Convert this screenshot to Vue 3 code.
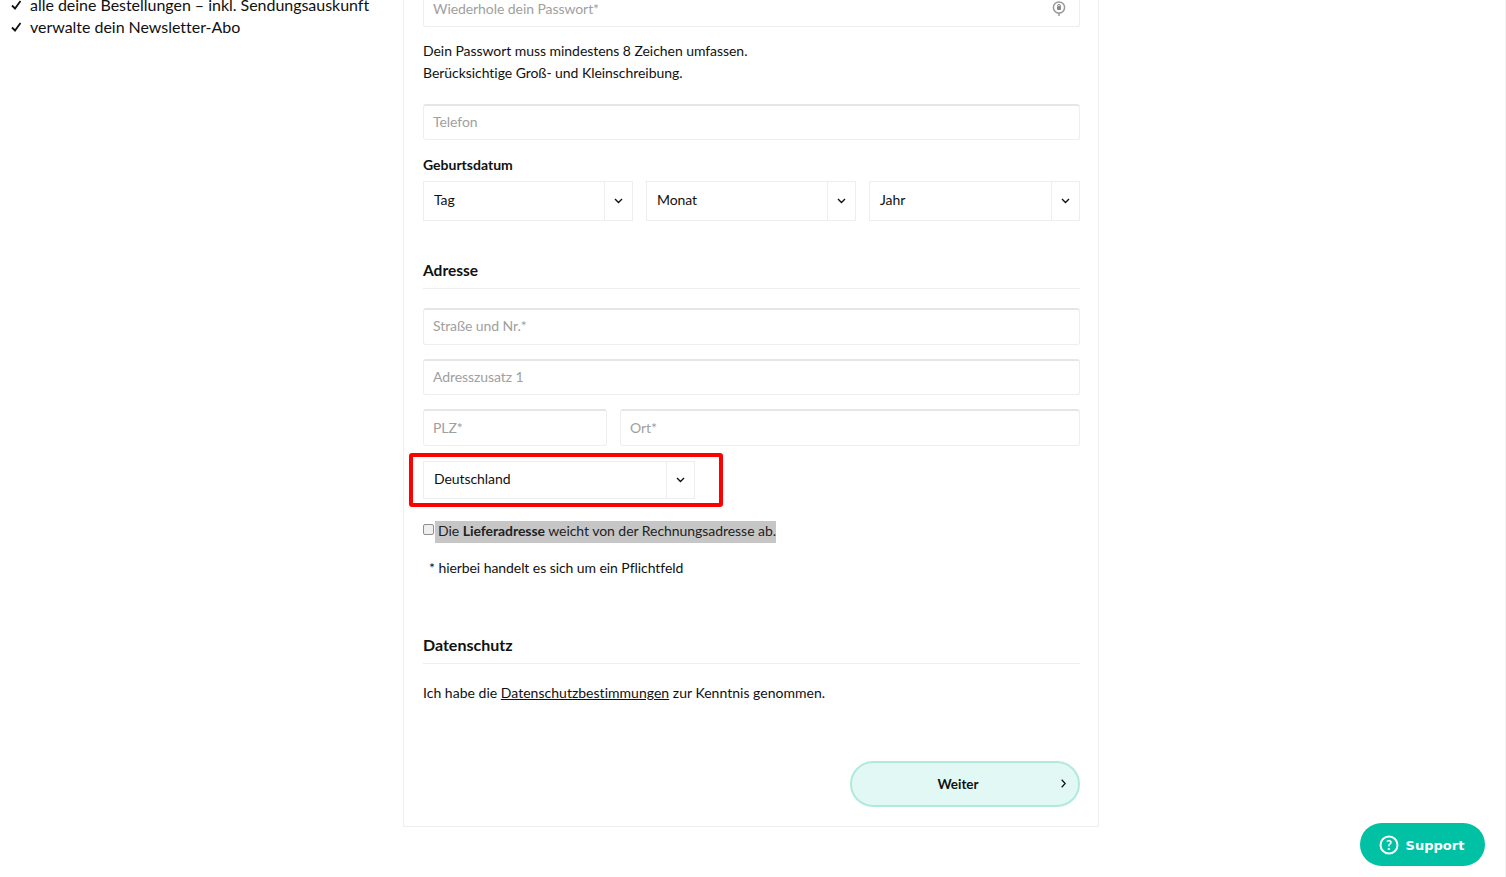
<script setup>
const selects = ['Tag', 'Monat', 'Jahr']
const items = ['alle deine Bestellungen – inkl. Sendungsauskunft', 'verwalte dein Newsletter-Abo']
</script>

<template>
  <div class="page">
    <aside class="side">
      <ul class="list">
        <li v-for="item in items" :key="item">
          <svg class="check" width="11" height="10" viewBox="0 0 11 10"><path d="M1 5.5 L4 8.5 L9.5 1" fill="none" stroke="#111" stroke-width="1.8"/></svg>
          <span>{{ item }}</span>
        </li>
      </ul>
    </aside>
    <main class="card">
      <div class="input pw">
        <span class="ph">Wiederhole dein Passwort*</span>
        <svg class="eye" width="14" height="17" viewBox="0 0 14 17">
          <circle cx="7" cy="7.5" r="5.6" fill="none" stroke="#999" stroke-width="1.5"/>
          <rect x="5" y="6" width="4" height="4" rx="1" fill="#888"/>
          <path d="M5.6 6 a1.4 1.6 0 0 1 2.8 0" fill="none" stroke="#888" stroke-width="1"/>
          <path d="M7 13 v3" stroke="#999" stroke-width="1.5"/>
        </svg>
      </div>
      <p class="hint">Dein Passwort muss mindestens 8 Zeichen umfassen.<br>Berücksichtige Groß- und Kleinschreibung.</p>
      <div class="input tel"><span class="ph">Telefon</span></div>
      <div class="label">Geburtsdatum</div>
      <div class="dates">
        <div v-for="s in selects" :key="s" class="select">
          <span class="val">{{ s }}</span>
          <span class="arrow">
            <svg width="9" height="6" viewBox="0 0 9 6"><path d="M1 1 L4.5 4.5 L8 1" fill="none" stroke="#111" stroke-width="1.4"/></svg>
          </span>
        </div>
      </div>
      <h2 class="heading adresse">Adresse</h2>
      <div class="input street"><span class="ph">Straße und Nr.*</span></div>
      <div class="input extra"><span class="ph">Adresszusatz 1</span></div>
      <div class="city">
        <div class="input plz"><span class="ph">PLZ*</span></div>
        <div class="input ort"><span class="ph">Ort*</span></div>
      </div>
      <div class="country">
        <div class="select land">
          <span class="val">Deutschland</span>
          <span class="arrow">
            <svg width="9" height="6" viewBox="0 0 9 6"><path d="M1 1 L4.5 4.5 L8 1" fill="none" stroke="#111" stroke-width="1.4"/></svg>
          </span>
        </div>
        <div class="redbox"></div>
      </div>
      <div class="checkrow">
        <span class="box"></span>
        <span class="mark">Die <b>Lieferadresse</b> weicht von der Rechnungsadresse ab.</span>
      </div>
      <p class="req">* hierbei handelt es sich um ein Pflichtfeld</p>
      <h2 class="heading privacy">Datenschutz</h2>
      <p class="consent">Ich habe die <a class="link">Datenschutzbestimmungen</a> zur Kenntnis genommen.</p>
      <div class="actions">
        <button class="next" type="button">
          <span>Weiter</span>
          <svg class="chev" width="5" height="9" viewBox="0 0 5 9"><path d="M0.7 0.8 L4.2 4.5 L0.7 8.2" fill="none" stroke="#111" stroke-width="1.3"/></svg>
        </button>
      </div>
    </main>
    <button class="support" type="button">
      <svg width="20" height="20" viewBox="0 0 20 20">
        <circle cx="10" cy="10" r="8.5" fill="none" stroke="#fff" stroke-width="2"/>
        <text x="10" y="14.5" text-anchor="middle" font-size="13" font-weight="700" fill="#fff" font-family="Lato, sans-serif">?</text>
      </svg>
      <span class="support-text">Support</span>
    </button>
  </div>
</template>

<style>
html, body { margin: 0; background: #fff; overflow: hidden; }
</style>

<style scoped>
.page {
  position: relative;
  box-sizing: border-box;
  height: 877px;
  overflow: hidden;
  display: flex;
  align-items: flex-start;
  font-family: Lato, "Open Sans", sans-serif;
  font-size: 14px;
  color: #111;
  background: #fff;
  border-right: 1px solid #f2f2f2;
}
.side { width: 403px; flex: none; }
.list { list-style: none; margin: -6px 0 0; padding: 0 0 0 11px; font-size: 16px; line-height: 22px; letter-spacing: -0.03px; }
.list li { display: flex; align-items: center; height: 22px; }
.check { margin-right: 8px; flex: none; }
.card {
  width: 696px;
  height: 836px;
  flex: none;
  box-sizing: border-box;
  margin-top: -9px;
  padding: 0 18px 0 19px;
  border: 1px solid #eee;
  border-top: 0;
}
.input {
  box-sizing: border-box;
  height: 36px;
  border: 1px solid #eee;
  border-top: 2px solid #e6e6e6;
  border-radius: 3px;
  padding: 0 9px 2px;
  display: flex;
  align-items: center;
  letter-spacing: -0.07px;
}
.ph { color: #a0a0a0; }
.pw { position: relative; border-top: 0; justify-content: space-between; padding-bottom: 0; }
.eye { margin-right: 4px; margin-top: 0; }
.hint { margin: 13px 0 0; line-height: 22px; letter-spacing: -0.05px; }
.tel { margin-top: 20px; }
.label { margin-top: 16px; font-weight: 700; line-height: 17px; }
.dates { display: flex; gap: 13px; margin-top: 8px; }
.select {
  box-sizing: border-box;
  height: 40px;
  border: 1px solid #eee;
  display: flex;
  align-items: center;
  letter-spacing: -0.07px;
}
.dates .select { flex: 0 0 210px; }
.dates .select:last-child { flex: 1; }
.val { flex: 1; padding: 0 0 3px 10px; }
.arrow {
  box-sizing: border-box;
  width: 28px;
  height: 100%;
  border-left: 1px solid #eee;
  display: flex;
  align-items: center;
  justify-content: center;
}
.heading {
  margin: 0;
  font-size: 15.5px;
  font-weight: 700;
  line-height: 19px;
  padding-bottom: 8px;
  border-bottom: 1px solid #eee;
}
.adresse { margin-top: 40px; }
.street { margin-top: 19px; height: 37px; padding-bottom: 3px; }
.extra { margin-top: 14px; }
.city { display: flex; gap: 13px; margin-top: 14px; }
.plz { width: 184px; height: 37px; }
.ort { flex: 1; height: 37px; }
.country { position: relative; margin-top: 15px; }
.land { width: 272px; height: 38px; }
.redbox {
  position: absolute;
  left: -14px;
  top: -8px;
  width: 314px;
  height: 54px;
  box-sizing: border-box;
  border: 4px solid #f00;
  border-radius: 3px;
}
.checkrow { display: flex; align-items: flex-start; margin-top: 22px; }
.box {
  box-sizing: border-box;
  width: 11px;
  height: 11px;
  margin-top: 3px;
  border: 1px solid #8f8f8f;
  border-radius: 2px;
  background: #efefef;
  flex: none;
}
.mark {
  margin-left: 1px;
  padding: 0 0 1px 3px;
  height: 21px;
  background: #c6c6c6;
  line-height: 20px;
  letter-spacing: -0.05px;
  color: #222;
}
.req { margin: 14px 0 0 6px; line-height: 22px; letter-spacing: -0.07px; }
.privacy { margin-top: 56px; font-size: 16px; padding-bottom: 9px; }
.consent { margin: 18px 0 0; line-height: 22px; letter-spacing: 0.02px; }
.link { text-decoration: underline; color: #111; }
.actions { display: flex; justify-content: flex-end; margin-top: 57px; }
.next {
  position: relative;
  width: 230px;
  height: 46px;
  box-sizing: border-box;
  border: 2px solid #b0eadf;
  border-radius: 23px;
  background: #e2f8f5;
  color: #111;
  font: 700 13.5px Lato, sans-serif;
  padding: 0 14px 1px 0;
}
.chev { position: absolute; right: 12px; top: 16px; }
.support {
  position: absolute;
  left: 1360px;
  top: 823px;
  width: 125px;
  height: 43px;
  border: 0;
  border-radius: 22px;
  background: #00c1a4;
  color: #fff;
  font: 700 13px "DejaVu Sans", sans-serif;
  display: flex;
  align-items: center;
  justify-content: center;
  gap: 7px;
  padding: 0 2px 0 0;
}
.support-text { padding-top: 1px; }
</style>
